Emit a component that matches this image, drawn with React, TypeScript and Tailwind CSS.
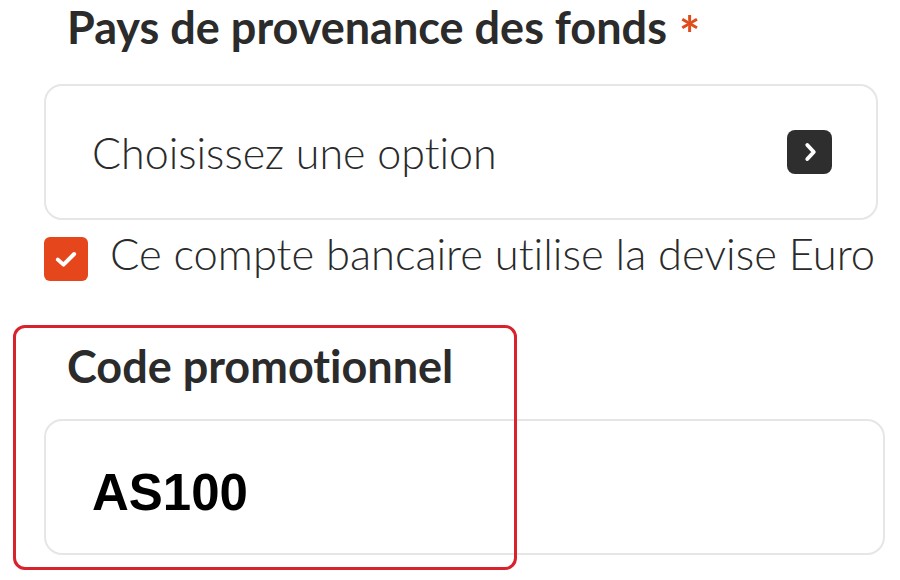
import React from "react";

export default function App() {
  return (
    <div className="relative w-[900px] h-[580px] bg-white overflow-hidden font-['Lato',sans-serif] [font-variant-ligatures:none]">
      <div className="flex flex-col pl-[44px] pt-[2px]">
        <div className="pl-[23px] h-[50px] flex items-center text-[45px] leading-none font-bold text-[#2b2b2b]">
          <span>Pays de provenance des fonds</span>
          <span className="ml-[12px] text-[50px] leading-none text-[#e04b1a] relative top-[7px]">*</span>
        </div>
        <div className="mt-[32px] w-[834px] h-[136px] rounded-[18px] border-2 border-[#e6e6e6] flex items-center justify-between pl-[46px] pr-[44px]">
          <span className="text-[43px] font-light text-[#2a2a2a] leading-none">Choisissez une option</span>
          <div className="w-[45px] h-[44px] rounded-[8px] bg-[#2e2e2e] flex items-center justify-center">
            <svg width="26" height="26" viewBox="0 0 24 24" fill="none">
              <path d="M9.5 5.5 L15.5 12 L9.5 18.5" stroke="white" strokeWidth="3.6" strokeLinecap="round" strokeLinejoin="round" />
            </svg>
          </div>
        </div>
        <div className="mt-[17px] flex items-center h-[44px]">
          <div className="w-[44px] h-[44px] rounded-[6px] bg-[#e5461b] flex items-center justify-center">
            <svg width="30" height="30" viewBox="0 0 24 24" fill="none">
              <path d="M5.5 12.5 L10 16.5 L18.5 8" stroke="white" strokeWidth="3.2" strokeLinecap="round" strokeLinejoin="round" />
            </svg>
          </div>
          <span className="ml-[22px] pb-[10px] text-[43.5px] font-light text-[#2a2a2a] leading-none">Ce compte bancaire utilise la devise Euro</span>
        </div>
        <div className="mt-[60px] pl-[23px] h-[50px] flex items-center text-[45px] leading-none font-bold text-[#2b2b2b]">
          Code promotionnel
        </div>
        <div className="mt-[28px] w-[841px] h-[136px] rounded-[18px] border-2 border-[#e6e6e6] flex items-center pl-[46px] pt-[10px]">
          <span className="text-[51px] font-bold text-black leading-none font-['Liberation_Sans',Arial,sans-serif]">AS100</span>
        </div>
      </div>
      <div className="absolute left-[13px] top-[325px] w-[504px] h-[245px] border-[3px] border-[#d8222c] rounded-[12px]" />
    </div>
  );
}
